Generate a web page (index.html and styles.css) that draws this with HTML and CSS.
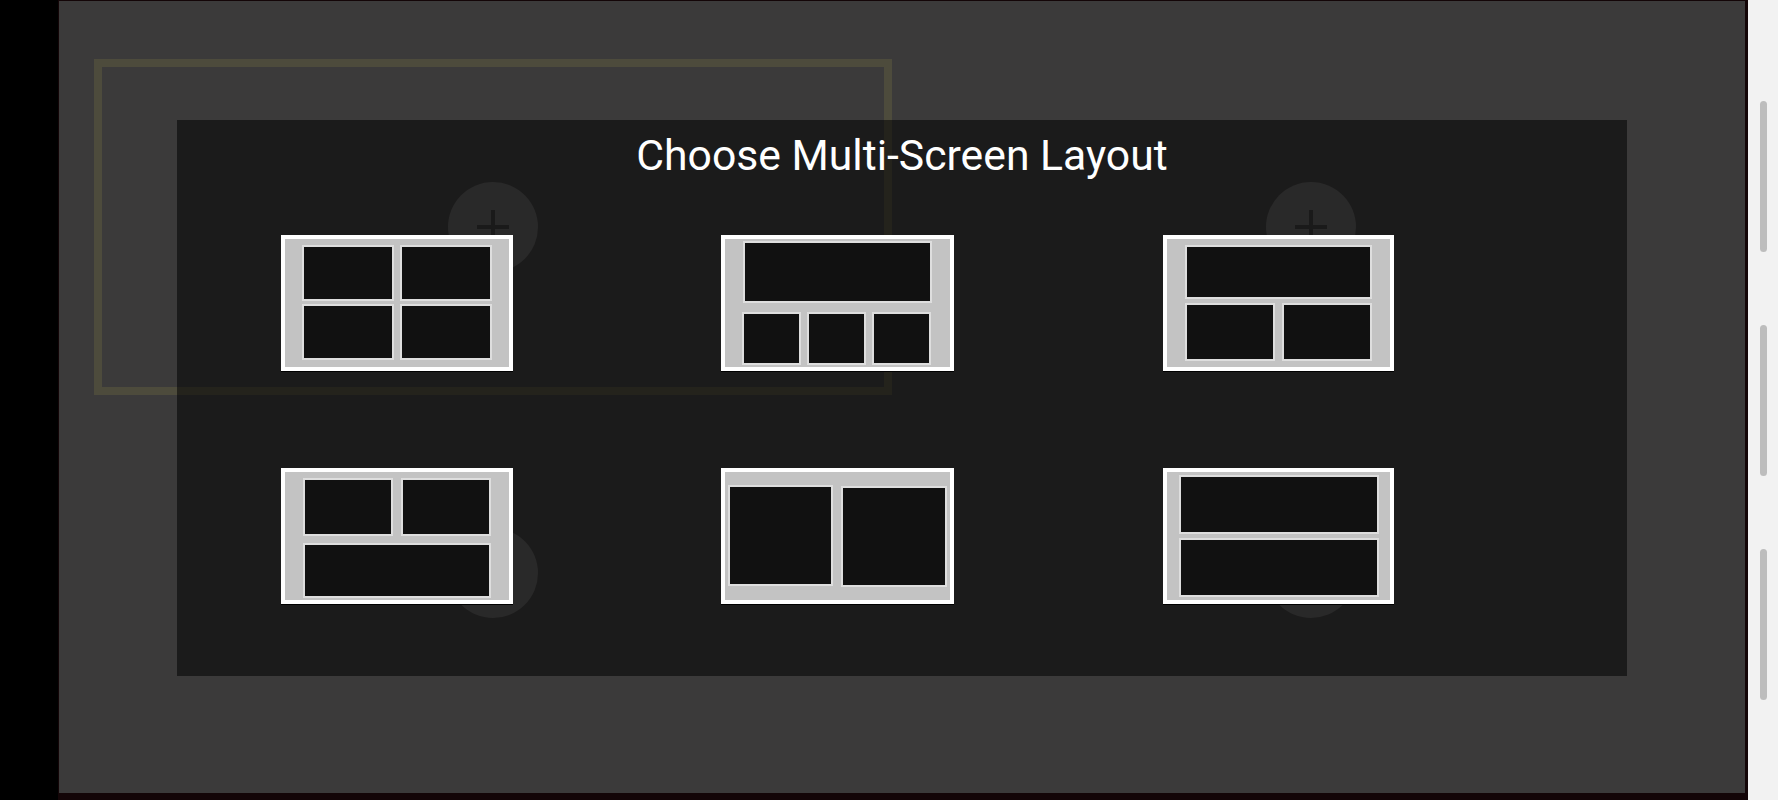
FILE: index.html
```html
<!DOCTYPE html>
<html lang="en">
<head>
<meta charset="utf-8">
<title>Choose Multi-Screen Layout</title>
<link rel="stylesheet" href="styles.css">
</head>
<body>
<div class="app">
  <div class="rail"></div>
  <div class="shell">
    <main class="stage">
      <div class="slot slot-selected"><div class="add"><span class="plus"></span></div></div>
      <div class="slot"><div class="add"><span class="plus"></span></div></div>
      <div class="slot"><div class="add"><span class="plus"></span></div></div>
      <div class="slot"><div class="add"><span class="plus"></span></div></div>
      <section class="dialog">
        <h1 class="dialog-title">Choose Multi-Screen Layout</h1>
        <div class="layouts">
          <div class="thumb quad">
            <div class="cell"></div><div class="cell"></div>
            <div class="cell"></div><div class="cell"></div>
          </div>
          <div class="thumb one-three">
            <div class="cell cell-wide"></div>
            <div class="cell"></div><div class="cell"></div><div class="cell"></div>
          </div>
          <div class="thumb one-two">
            <div class="cell cell-wide"></div>
            <div class="cell"></div><div class="cell"></div>
          </div>
          <div class="thumb two-one">
            <div class="cell"></div><div class="cell"></div>
            <div class="cell cell-wide"></div>
          </div>
          <div class="thumb side">
            <div class="cell cell-high"></div><div class="cell cell-low"></div>
          </div>
          <div class="thumb stack">
            <div class="cell"></div><div class="cell"></div>
          </div>
        </div>
      </section>
    </main>
  </div>
  <aside class="handles">
    <span class="handle"></span>
    <span class="handle"></span>
    <span class="handle"></span>
  </aside>
</div>
</body>
</html>
```
FILE: styles.css
```css
* {
  box-sizing: border-box;
}

html,
body {
  margin: 0;
  height: 100%;
  background: #000;
  overflow: hidden;
}

.app {
  display: flex;
  width: 1778px;
  height: 800px;
}

.rail {
  flex: 0 0 58px;
  background: #000;
}

.shell {
  flex: 0 0 1690px;
  padding: 1px 3px 7px 1px;
  background: #130507;
}

.stage {
  position: relative;
  display: grid;
  grid-template-columns: 798px 798px;
  grid-template-rows: 336px 336px;
  column-gap: 20px;
  row-gap: 10px;
  align-content: start;
  height: 792px;
  padding: 58px 0 0 35px;
  background: #3b3a3a;
}

.slot {
  display: flex;
  align-items: center;
  justify-content: center;
}

.slot-selected {
  border: 8px solid #4d4b3c;
}

.add {
  display: flex;
  align-items: center;
  justify-content: center;
  width: 90px;
  height: 90px;
  border-radius: 50%;
  background: #585858;
}

.plus {
  position: relative;
  width: 32px;
  height: 34px;
}

.plus::before,
.plus::after {
  content: "";
  position: absolute;
  background: #393939;
}

.plus::before {
  left: 0;
  right: 0;
  top: 15px;
  height: 4px;
}

.plus::after {
  top: 0;
  bottom: 0;
  left: 14px;
  width: 4px;
}

.dialog {
  position: absolute;
  left: 118px;
  top: 119px;
  width: 1450px;
  height: 556px;
  background: rgba(0, 0, 0, 0.53);
}

.dialog-title {
  height: 115px;
  margin: 0;
  padding-top: 10px;
  color: #fff;
  font: 400 42.7px/50px Roboto, "Liberation Sans", sans-serif;
  text-align: center;
}

.layouts {
  display: grid;
  grid-template-columns: repeat(3, 232px);
  grid-template-rows: 136px 136px;
  column-gap: 209px;
  row-gap: 97px;
  padding-left: 104px;
}

.thumb {
  display: grid;
  align-content: start;
  justify-content: start;
  border: 4px solid #fff;
  background: #c3c3c3;
  box-shadow: 0 1px 0 #000;
}

.cell {
  border: 2px solid #dedede;
  background: #111;
}

.cell-wide {
  grid-column: 1 / -1;
}

.cell-high {
  margin-bottom: 1px;
}

.cell-low {
  margin-top: 1px;
}

.quad {
  grid-template-columns: 92px 92px;
  grid-template-rows: 56px 56px;
  gap: 3px 6px;
  padding: 6px 0 0 17px;
}

.one-three {
  grid-template-columns: 59px 59px 59px;
  grid-template-rows: 62px 53px;
  gap: 9px 6px;
  margin-left: -1px;
  padding: 2px 0 0 17px;
}

.one-three .cell-wide {
  width: 189px;
  margin-left: 1px;
}

.one-two {
  grid-template-columns: 90px 90px;
  grid-template-rows: 54px 58px;
  gap: 4px 7px;
  margin-right: 1px;
  padding: 6px 0 0 18px;
}

.two-one {
  grid-template-columns: 90px 90px;
  grid-template-rows: 58px 55px;
  gap: 7px 8px;
  padding: 6px 0 0 18px;
}

.side {
  grid-template-columns: 105px 106px;
  grid-template-rows: 102px;
  column-gap: 8px;
  margin-left: -1px;
  padding: 13px 0 0 3px;
}

.stack {
  grid-template-columns: 200px;
  grid-template-rows: 59px 59px;
  row-gap: 4px;
  margin-right: 1px;
  padding: 3px 0 0 12px;
}

.handles {
  display: flex;
  flex: 0 0 30px;
  flex-direction: column;
  gap: 73px;
  padding: 101px 0 0 12px;
  background: #f2f2f2;
}

.handle {
  display: block;
  width: 7px;
  height: 151px;
  border-radius: 4px;
  background: #bdbdbd;
}
```
